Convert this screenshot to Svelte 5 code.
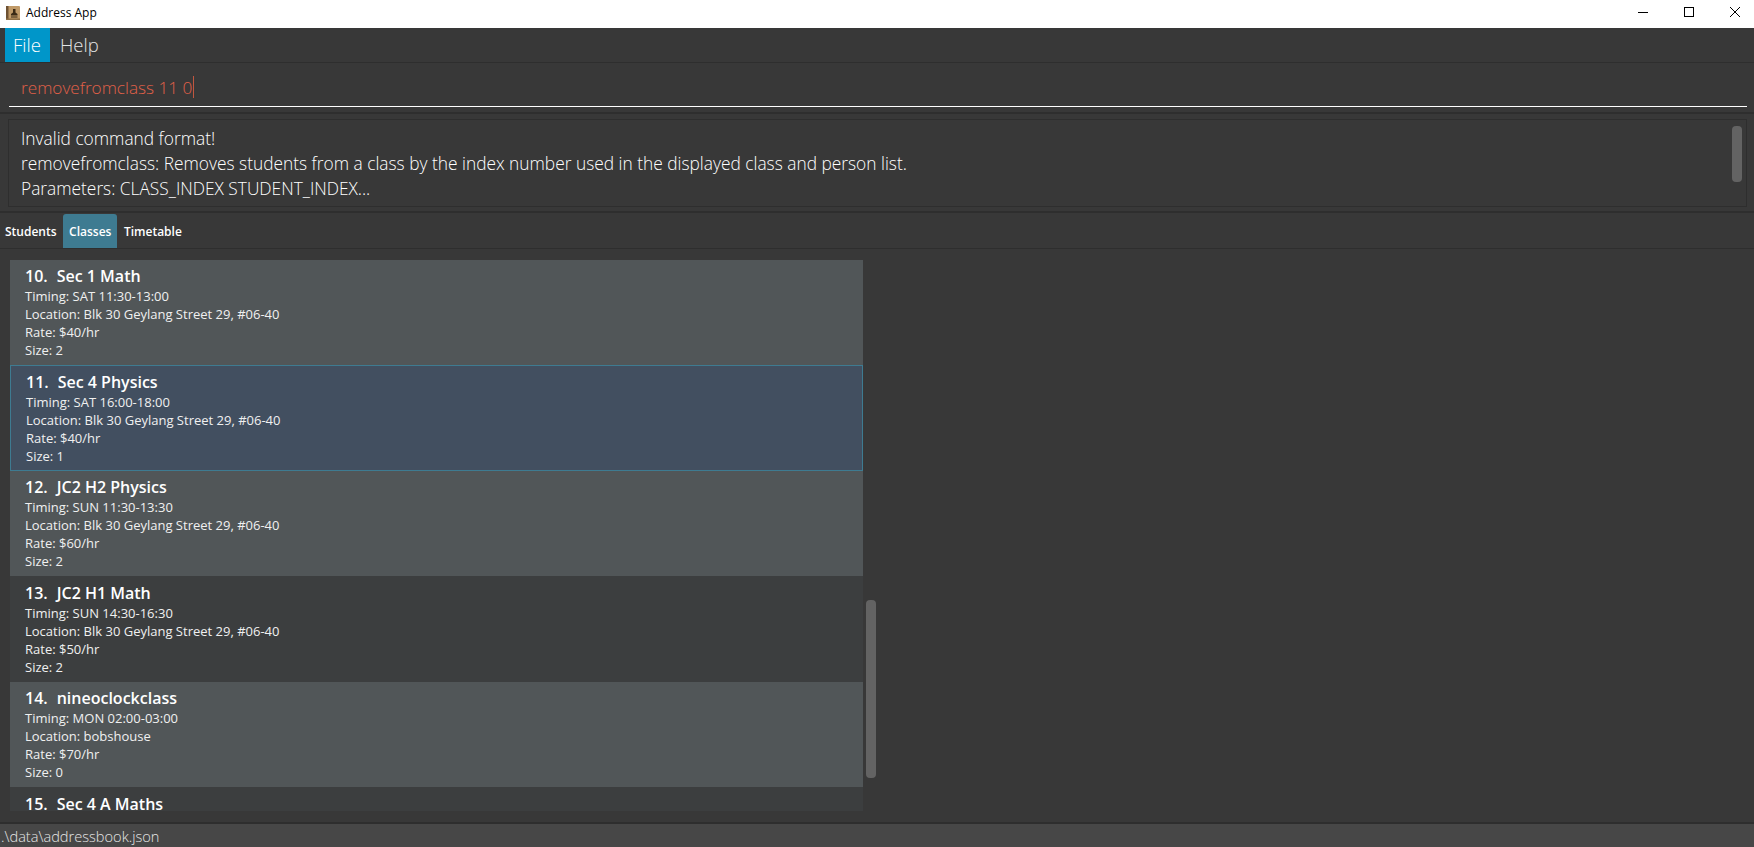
<script>
  const classes = [
    { n: 10, name: 'Sec 1 Math', timing: 'SAT 11:30-13:00', loc: 'Blk 30 Geylang Street 29, #06-40', rate: '$40/hr', size: 2 },
    { n: 11, name: 'Sec 4 Physics', timing: 'SAT 16:00-18:00', loc: 'Blk 30 Geylang Street 29, #06-40', rate: '$40/hr', size: 1, selected: true },
    { n: 12, name: 'JC2 H2 Physics', timing: 'SUN 11:30-13:30', loc: 'Blk 30 Geylang Street 29, #06-40', rate: '$60/hr', size: 2 },
    { n: 13, name: 'JC2 H1 Math', timing: 'SUN 14:30-16:30', loc: 'Blk 30 Geylang Street 29, #06-40', rate: '$50/hr', size: 2 },
    { n: 14, name: 'nineoclockclass', timing: 'MON 02:00-03:00', loc: 'bobshouse', rate: '$70/hr', size: 0 },
    // only the heading of this one is scrolled into view
    { n: 15, name: 'Sec 4 A Maths' },
  ];
</script>

<div class="window">
  <header class="titlebar">
    <svg class="appicon" viewBox="0 0 14 14" aria-hidden="true">
      <rect x="0" y="0" width="14" height="14" rx="1" fill="#c09a68" />
      <rect x="0" y="0" width="2.500" height="14" fill="#6e5233" />
      <rect x="0" y="12.500" width="14" height="1.500" fill="#8f7047" />
      <path d="M7 3h2.500v3.500l2 1.500v1.500H5V8l2-1.500z" fill="#3a2a16" />
      <rect x="5" y="10.500" width="6.500" height="1" fill="#3a2a16" />
    </svg>
    <span class="apptitle">Address App</span>
    <div class="winctl">
      <svg width="12" height="12" viewBox="0 0 12 12"><path d="M1 6.500h10" stroke="#000" fill="none" /></svg>
      <svg width="12" height="12" viewBox="0 0 12 12"><rect x="1.500" y="1.500" width="9" height="9" stroke="#000" fill="none" /></svg>
      <svg width="12" height="12" viewBox="0 0 12 12"><path d="M1 1l10 10M11 1L1 11" stroke="#000" fill="none" /></svg>
    </div>
  </header>

  <nav class="menubar">
    <span class="menu active">File</span>
    <span class="menu">Help</span>
  </nav>

  <section class="command">
    <div class="cmdfield"><span class="cmdtext">removefromclass 11 0</span><span class="caret"></span></div>
  </section>

  <section class="result">
    <div class="resultbox">
      <p>Invalid command format!</p>
      <p>removefromclass: Removes students from a class by the index number used in the displayed class and person list.</p>
      <p>Parameters: CLASS_INDEX STUDENT_INDEX...</p>
      <div class="thumb resultthumb"></div>
    </div>
  </section>

  <div class="tabs">
    <span class="tab">Students</span>
    <span class="tab current">Classes</span>
    <span class="tab">Timetable</span>
  </div>

  <main class="content">
    <div class="list">
      {#each classes as c, i (c.n)}
        <article class="card" class:odd={i % 2 === 0} class:selected={c.selected}>
          <h2><span class="idx">{c.n}.</span>{c.name}</h2>
          {#if c.timing}
            <p>Timing: {c.timing}</p>
            <p>Location: {c.loc}</p>
            <p>Rate: {c.rate}</p>
            <p>Size: {c.size}</p>
          {/if}
        </article>
      {/each}
    </div>
    <div class="track"><div class="thumb listthumb"></div></div>
  </main>

  <footer class="status">.\data\addressbook.json</footer>
</div>

<style>
  :global(body) {
    margin: 0;
    background: #383838;
  }
  .window {
    width: 1754px;
    height: 847px;
    display: flex;
    flex-direction: column;
    overflow: hidden;
    font-family: "Open Sans", "Noto Sans", sans-serif;
    background: #383838;
    color: #fff;
  }
  p, h2 { margin: 0; }

  .titlebar {
    height: 28px;
    flex: none;
    box-sizing: border-box;
    background: #fff;
    display: flex;
    align-items: center;
    padding: 0 0 3px 6px;
    color: #000;
  }
  .appicon { width: 14px; height: 14px; margin-right: 6px; }
  .apptitle { font-size: 12px; }
  .winctl {
    margin-left: auto;
    margin-bottom: 1px;
    display: flex;
    gap: 34px;
    padding-right: 13px;
  }
  .winctl svg { display: block; }

  .menubar {
    height: 35px;
    flex: none;
    box-sizing: border-box;
    display: flex;
    padding-left: 5px;
    border-bottom: 1px solid #2e2e2e;
  }
  .menu {
    display: flex;
    align-items: center;
    padding: 0 10px 2px;
    font-size: 18.500px;
    font-weight: 300;
    color: #e4e4e4;
  }
  .menu.active { background: #0096c9; color: #fff; width: 27px; padding: 0 10px 2px 8px; }

  .command {
    height: 51px;
    flex: none;
    box-sizing: border-box;
    padding: 0 7px 0 9px;
    border-bottom: 2px solid #2e2e2e;
  }
  .cmdfield {
    height: 44px;
    box-sizing: border-box;
    border-bottom: 1px solid #fff;
    display: flex;
    align-items: center;
    padding: 5px 0 0 12px;
    font-size: 17.200px;
    font-weight: 300;
    color: #e06048;
  }
  .caret { width: 1px; height: 22px; background: #c0563f; margin-left: 1px; }

  .result {
    height: 99px;
    flex: none;
    box-sizing: border-box;
    padding: 5px 7px 0 8px;
    border-bottom: 2px solid #2e2e2e;
  }
  .resultbox {
    position: relative;
    height: 88px;
    box-sizing: border-box;
    border: 1px solid #2e2e2e;
    padding: 6px 12px;
    font-size: 17.330px;
    font-weight: 300;
    line-height: 25px;
  }
  .thumb { background: #636363; border-radius: 4px; width: 10px; }
  .resultthumb { position: absolute; right: 4px; top: 6px; height: 56px; }

  .tabs {
    height: 36px;
    flex: none;
    box-sizing: border-box;
    padding-top: 1px;
    display: flex;
    border-bottom: 1px solid #2e2e2e;
    font-size: 12px;
    font-weight: 600;
  }
  .tab {
    display: flex;
    align-items: center;
    padding: 0 5px;
    height: 34px;
  }
  .tab.current {
    background: #3e7b91;
    border-radius: 3px 3px 0 0;
    padding: 0 6px 0 6.500px;
    margin: 0 1.500px 0 1px;
  }

  .content {
    flex: 1;
    min-height: 0;
    display: flex;
    padding: 10.700px 0 0 10px;
  }
  .list {
    width: 853px;
    height: 551.500px;
    overflow: hidden;
    background: #3c3e3f;
  }
  .card {
    height: 105.500px;
    box-sizing: border-box;
    padding: 4.400px 15px 0;
    background: #3c3e3f;
    font-size: 13px;
    line-height: 18px;
    color: #f0f0f0;
  }
  .card.odd { background: #515658; }
  .card.selected {
    background: #424f60;
    border: 1px solid #3e7b91;
    padding-top: 4.300px;
  }
  .card h2 {
    font-size: 16px;
    font-weight: 600;
    line-height: 24px;
    color: #fff;
    margin-bottom: -1px;
  }
  .idx { margin-right: 9px; }
  .track { padding: 340.300px 0 0 3px; }
  .listthumb { height: 178px; }

  .status {
    flex: none;
    height: 25px;
    box-sizing: border-box;
    background: #474747;
    border-top: 2px solid #2e2e2e;
    padding-left: 1px;
    font-size: 14.600px;
    font-weight: 300;
    line-height: 25px;
    color: #e6e6e6;
  }
</style>
